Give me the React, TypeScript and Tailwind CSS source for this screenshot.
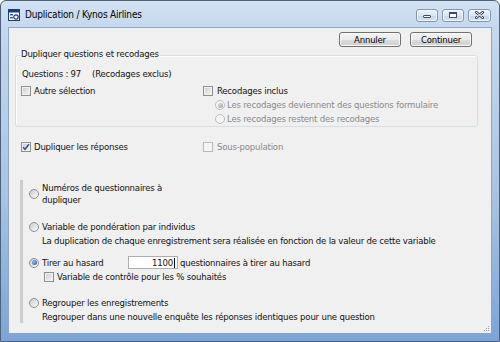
import React from 'react';

const Check: React.FC<{ checked?: boolean; disabled?: boolean }> = ({ checked, disabled }) => (
  <span
    className={`w-[10px] h-[10px] shrink-0 border flex items-center justify-center ${
      disabled
        ? 'border-[#b9b9b9] bg-[#f4f4f4]'
        : 'border-[#8e8f8f] bg-[linear-gradient(135deg,#c8ccd2,#f8f8f8)] shadow-[inset_0_0_0_1px_#f2f2f2]'
    }`}
  >
    {checked && (
      <svg width="8" height="8" viewBox="0 0 8 8">
        <path d="M1 4.2 L3 6.3 L7 1.2" fill="none" stroke="#3a5596" strokeWidth="1.6" />
      </svg>
    )}
  </span>
);

const Radio: React.FC<{ checked?: boolean; disabled?: boolean }> = ({ checked, disabled }) => (
  <span
    className={`w-[10px] h-[10px] shrink-0 rounded-full border flex items-center justify-center ${
      disabled
        ? 'border-[#bcbcbc] bg-[#f4f4f4]'
        : 'border-[#8e8f8f] bg-[linear-gradient(135deg,#c9cdd3,#fbfbfb)]'
    }`}
  >
    {checked && (
      <span
        className={`w-[5px] h-[5px] rounded-full ${
          disabled
            ? 'bg-[radial-gradient(circle_at_35%_35%,#d8d8d8,#9a9a9a)]'
            : 'bg-[radial-gradient(circle_at_35%_35%,#8fbdf0,#1d4f91)]'
        }`}
      />
    )}
  </span>
);

const WinButton: React.FC<{ label: string }> = ({ label }) => (
  <button className="w-[62px] h-[15px] border border-[#707070] rounded-[3px] bg-[linear-gradient(to_bottom,#f3f3f3_0%,#ebebeb_50%,#dddddd_51%,#cfcfcf_100%)] text-[9.5px] leading-none text-black shadow-[inset_0_0_0_1px_#fcfcfc]">
    {label}
  </button>
);

const CaptionButton: React.FC<{ children: React.ReactNode; wide?: boolean }> = ({ children, wide }) => (
  <div
    className={`${wide ? 'w-[23px]' : 'w-[22px]'} h-[13px] border border-[#8196b2] rounded-[3px] bg-[linear-gradient(to_bottom,#eef3f9,#dbe5f0_50%,#c9d7e7_51%,#d5e1ee)] flex items-center justify-center shadow-[inset_0_0_0_1px_#f3f7fb]`}
  >
    {children}
  </div>
);

export default function App() {
  return (
    <div className="w-[500px] h-[342px] flex flex-col border border-[#4f6178] rounded-t-[6px] bg-[linear-gradient(to_bottom,#d3e2f3_0px,#c4d8ee_27px,#a9c5e4_55%,#7ba5d6_100%)] font-['DejaVu_Sans_Condensed','Liberation_Sans_Narrow',sans-serif] text-[9.5px] tracking-[-0.2px] text-[#111] overflow-hidden">
      {/* Title bar */}
      <div className="h-[26px] shrink-0 flex items-center pl-[7px] pr-[8px] pt-[2px]">
        <svg width="12" height="12" viewBox="0 0 12 12" className="shrink-0">
          <rect x="0.5" y="0.5" width="11" height="11" fill="#ffffff" stroke="#1b3a7a" />
          <rect x="0.5" y="0.5" width="11" height="3" fill="#1b3a7a" />
          <rect x="2" y="5" width="3" height="1.5" fill="#2b5fb5" />
          <rect x="2" y="8" width="3" height="1.5" fill="#2b5fb5" />
          <circle cx="8" cy="8" r="2.2" fill="none" stroke="#1b3a7a" strokeWidth="1.2" />
        </svg>
        <span className="ml-[5px] text-[10px] leading-none text-black">Duplication / Kynos Airlines</span>
        <div className="ml-auto flex gap-[4px]">
          <CaptionButton>
            <span className="w-[8px] h-[3px] border border-[#3d4d63] bg-white rounded-[1px] mt-[3px]" />
          </CaptionButton>
          <CaptionButton>
            <span className="w-[8px] h-[6px] border border-[#3d4d63] border-t-[2px] bg-white" />
          </CaptionButton>
          <CaptionButton wide>
            <svg width="9" height="8" viewBox="0 0 9 8">
              <path d="M1 1 L8 7 M8 1 L1 7" stroke="#3d4d63" strokeWidth="2.6" strokeLinecap="round" />
              <path d="M1 1 L8 7 M8 1 L1 7" stroke="#ffffff" strokeWidth="1" strokeLinecap="round" />
            </svg>
          </CaptionButton>
        </div>
      </div>

      {/* Client area */}
      <div className="relative flex-1 min-h-0 overflow-hidden mx-[7px] mb-[7px] bg-[#f0f0f0] border border-[#8ea6c4] flex flex-col">
        <div className="flex justify-end gap-[9px] pr-[19px] mt-[4px]">
          <WinButton label="Annuler" />
          <WinButton label="Continuer" />
        </div>

        <fieldset className="ml-[6px] w-[463px] border border-[#d5dfe5] rounded-[3px] shadow-[inset_1px_1px_0_#ffffff]">
          <legend className="ml-[4px] px-[1px] leading-[13px] pb-[4px]">Dupliquer questions et recodages</legend>
          <div className="pl-[5px] pt-[3px]">
            <div className="flex leading-[13px] ml-[1px]">
              <span>Questions : 97</span>
              <span className="ml-[11px]">(Recodages exclus)</span>
            </div>
            <div className="grid grid-cols-[182px_1fr] mt-[4px]">
              <div className="flex items-center gap-[3px] h-[13px] self-start">
                <Check />
                <span className="leading-[13px]">Autre sélection</span>
              </div>
              <div className="flex flex-col">
                <div className="flex items-center gap-[4px] h-[13px]">
                  <Check />
                  <span className="leading-[13px]">Recodages inclus</span>
                </div>
                <div className="flex items-center gap-[2px] h-[14px] ml-[12px] mt-[1px] text-[#8a8a8a]">
                  <Radio checked disabled />
                  <span className="leading-[14px]">Les recodages deviennent des questions formulaire</span>
                </div>
                <div className="flex items-center gap-[2px] h-[14px] ml-[12px] text-[#8a8a8a]">
                  <Radio disabled />
                  <span className="leading-[14px]">Les recodages restent des recodages</span>
                </div>
              </div>
            </div>
          </div>
        </fieldset>

        <div className="grid grid-cols-[182px_1fr] ml-[12px] mt-[13px]">
          <div className="flex items-center gap-[3px] h-[13px]">
            <Check checked />
            <span className="leading-[13px]">Dupliquer les réponses</span>
          </div>
          <div className="flex items-center gap-[4px] h-[13px] text-[#8a8a8a]">
            <Check disabled />
            <span className="leading-[13px]">Sous-population</span>
          </div>
        </div>

        <div className="ml-[11px] mt-[27px] w-[460px] border-l-[3px] border-[#cdcdcd] pl-[6px] pt-[2px] flex flex-col">
          <div className="flex items-center gap-[3px]">
            <Radio />
            <span className="leading-[12px]">
              Numéros de questionnaires à
              <br />
              dupliquer
            </span>
          </div>

          <div className="flex items-center gap-[3px] h-[13px] mt-[14px]">
            <Radio />
            <span className="leading-[13px]">Variable de pondération par individus</span>
          </div>
          <div className="pl-[13px] mt-[1px] leading-[13px]">
            La duplication de chaque enregistrement sera réalisée en fonction de la valeur de cette variable
          </div>

          <div className="flex items-center h-[13px] mt-[9px]">
            <Radio checked />
            <span className="ml-[3px] w-[86px] leading-[13px]">Tirer au hasard</span>
            <div className="w-[50px] h-[13px] border border-[#abadb3] bg-white flex items-center justify-end pr-[2px]">
              <span className="leading-[11px]">1100</span>
              <span className="ml-[1px] w-px h-[10px] bg-black" />
            </div>
            <span className="ml-[2px] leading-[13px]">questionnaires à tirer au hasard</span>
          </div>
          <div className="flex items-center gap-[3px] h-[13px] mt-[1px] ml-[15px]">
            <Check />
            <span className="leading-[13px]">Variable de contrôle pour les % souhaités</span>
          </div>

          <div className="flex items-center gap-[3px] h-[13px] mt-[13px]">
            <Radio />
            <span className="leading-[13px]">Regrouper les enregistrements</span>
          </div>
          <div className="pl-[13px] mt-[1px] leading-[13px]">
            Regrouper dans une nouvelle enquête les réponses identiques pour une question
          </div>
        </div>

        {/* resize grip */}
        <div className="absolute right-[2px] bottom-[2px] grid grid-cols-3 gap-[1px]">
          <span className="w-px h-px" />
          <span className="w-px h-px" />
          <span className="w-px h-px bg-[#a0a0a0]" />
          <span className="w-px h-px" />
          <span className="w-px h-px bg-[#a0a0a0]" />
          <span className="w-px h-px bg-[#a0a0a0]" />
          <span className="w-px h-px bg-[#a0a0a0]" />
          <span className="w-px h-px bg-[#a0a0a0]" />
          <span className="w-px h-px bg-[#a0a0a0]" />
        </div>
      </div>
    </div>
  );
}
